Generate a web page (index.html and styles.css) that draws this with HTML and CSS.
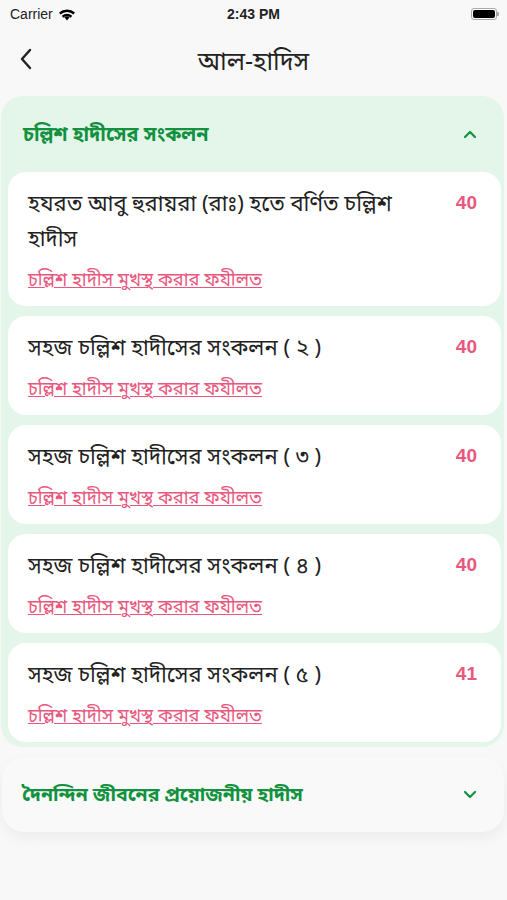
FILE: index.html
```html
<!DOCTYPE html>
<html>
<head>
<meta charset="utf-8">
<link rel="stylesheet" href="styles.css">
</head>
<body>
<div class="status">
  <div class="carrier">Carrier
    <svg class="wifi" width="18" height="13" viewBox="0 0 18 13"><path d="M9 12.5l2.6-3.2a4.2 4.2 0 0 0-5.2 0z" fill="#000"/><path d="M1 4.6a12 12 0 0 1 16 0l-1.6 1.9a9.4 9.4 0 0 0-12.8 0z" fill="#000"/><path d="M3.8 7.8a7.8 7.8 0 0 1 10.4 0l-1.5 1.9a5.4 5.4 0 0 0-7.4 0z" fill="#000"/></svg>
  </div>
  <div class="time">2:43 PM</div>
  <div class="battery"><span class="batt-body"><span class="batt-fill"></span></span><span class="batt-tip"></span></div>
</div>
<div class="nav">
  <svg class="back" width="14" height="22" viewBox="0 0 14 22"><path d="M11 2L3 11l8 9" fill="none" stroke="#222" stroke-width="2.4" stroke-linecap="round" stroke-linejoin="round"/></svg>
  <div class="nav-title">আল-হাদিস</div>
</div>
<div class="panel open">
  <div class="panel-head">
    <span class="panel-title">চল্লিশ হাদীসের সংকলন</span>
    <svg class="chev" width="14" height="9" viewBox="0 0 14 9"><path d="M2 7l5-5 5 5" fill="none" stroke="#12913f" stroke-width="2.2" stroke-linecap="round" stroke-linejoin="round"/></svg>
  </div>
  <div class="cards">
    <div class="card">
      <div class="row"><div class="title">হযরত আবু হুরায়রা (রাঃ) হতে বর্ণিত চল্লিশ হাদীস</div><div class="num">40</div></div>
      <a class="link">চল্লিশ হাদীস মুখস্থ করার ফযীলত</a>
    </div>
    <div class="card">
      <div class="row"><div class="title">সহজ চল্লিশ হাদীসের সংকলন ( ২ )</div><div class="num">40</div></div>
      <a class="link">চল্লিশ হাদীস মুখস্থ করার ফযীলত</a>
    </div>
    <div class="card">
      <div class="row"><div class="title">সহজ চল্লিশ হাদীসের সংকলন ( ৩ )</div><div class="num">40</div></div>
      <a class="link">চল্লিশ হাদীস মুখস্থ করার ফযীলত</a>
    </div>
    <div class="card">
      <div class="row"><div class="title">সহজ চল্লিশ হাদীসের সংকলন ( ৪ )</div><div class="num">40</div></div>
      <a class="link">চল্লিশ হাদীস মুখস্থ করার ফযীলত</a>
    </div>
    <div class="card">
      <div class="row"><div class="title">সহজ চল্লিশ হাদীসের সংকলন ( ৫ )</div><div class="num">41</div></div>
      <a class="link">চল্লিশ হাদীস মুখস্থ করার ফযীলত</a>
    </div>
  </div>
</div>
<div class="panel closed">
  <div class="panel-head">
    <span class="panel-title">দৈনন্দিন জীবনের প্রয়োজনীয় হাদীস</span>
    <svg class="chev" width="14" height="9" viewBox="0 0 14 9"><path d="M2 2l5 5 5-5" fill="none" stroke="#12913f" stroke-width="2.2" stroke-linecap="round" stroke-linejoin="round"/></svg>
  </div>
</div>
</body>
</html>
```
FILE: styles.css
```css
html, body {
  margin: 0;
  padding: 0;
}
body {
  width: 507px;
  height: 900px;
  background: #f8f8f8;
  font-family: "Noto Sans", "Noto Sans Bengali", "Lohit Bengali", sans-serif;
  color: #222;
  overflow: hidden;
}
.status {
  height: 28px;
  display: flex;
  align-items: center;
  justify-content: space-between;
  padding: 0 8px 0 10px;
  font-family: "Liberation Sans", Arial, sans-serif;
  font-size: 14px;
  position: relative;
}
.carrier {
  display: flex;
  align-items: center;
  gap: 5px;
  color: #222;
}
.time {
  position: absolute;
  left: 0;
  right: 0;
  text-align: center;
  font-weight: bold;
  font-size: 14px;
  color: #222;
}
.battery {
  display: flex;
  align-items: center;
}
.batt-body {
  border: 1px solid #aaa;
  border-radius: 3px;
  padding: 1px;
  box-sizing: border-box;
  display: flex;
  width: 26px;
  height: 12px;
}
.batt-fill {
  flex: 1;
  background: #000;
  border-radius: 2px;
}
.batt-tip {
  width: 2px;
  height: 4px;
  background: #aaa;
  border-radius: 0 1px 1px 0;
}
.nav {
  height: 64px;
  display: flex;
  align-items: center;
  position: relative;
  padding-left: 19px;
}
.back {
  position: relative;
  top: -1px;
}
.nav-title {
  position: absolute;
  left: 0;
  right: 0;
  top: 14px;
  text-align: center;
  font-size: 25px;
  line-height: 36px;
  color: #222;
  pointer-events: none;
}
.panel {
  margin: 4px 3px 0 1px;
  border-radius: 22px;
}
.panel.open {
  background: #e4f5ea;
  padding: 0 3px 5px 7px;
}
.panel.closed {
  margin-top: 10px;
  margin-left: 2px;
  margin-right: 3px;
  background: #f9f9f9;
  box-shadow: 0 6px 14px rgba(0,0,0,0.05);
}
.panel-head {
  height: 76px;
  display: flex;
  align-items: center;
  justify-content: space-between;
  padding: 0 24px 0 15px;
}
.panel.closed .panel-head {
  height: 75px;
  padding: 0 27px 0 20px;
}
.panel-title {
  color: #12913f;
  font-weight: bold;
  font-size: 19.8px;
}
.panel.closed .panel-title {
  font-size: 19.5px;
}
.chev {
  display: block;
}
.cards {
  display: flex;
  flex-direction: column;
  gap: 10px;
}
.card {
  background: #fff;
  border-radius: 18px;
  padding: 13px 24px 15px 20px;
}
.row {
  display: flex;
  justify-content: space-between;
  align-items: flex-start;
  gap: 24px;
}
.title {
  font-size: 22px;
  line-height: 35px;
  color: #222;
  flex: 1;
}
.num {
  font-family: "Liberation Sans", Arial, sans-serif;
  font-weight: bold;
  font-size: 19px;
  color: #e8587e;
  line-height: 35px;
}
.link {
  display: block;
  margin-top: 12px;
  font-size: 18.3px;
  line-height: 24px;
  color: #e8587e;
  text-decoration: underline;
  text-decoration-thickness: 1px;
}
```
